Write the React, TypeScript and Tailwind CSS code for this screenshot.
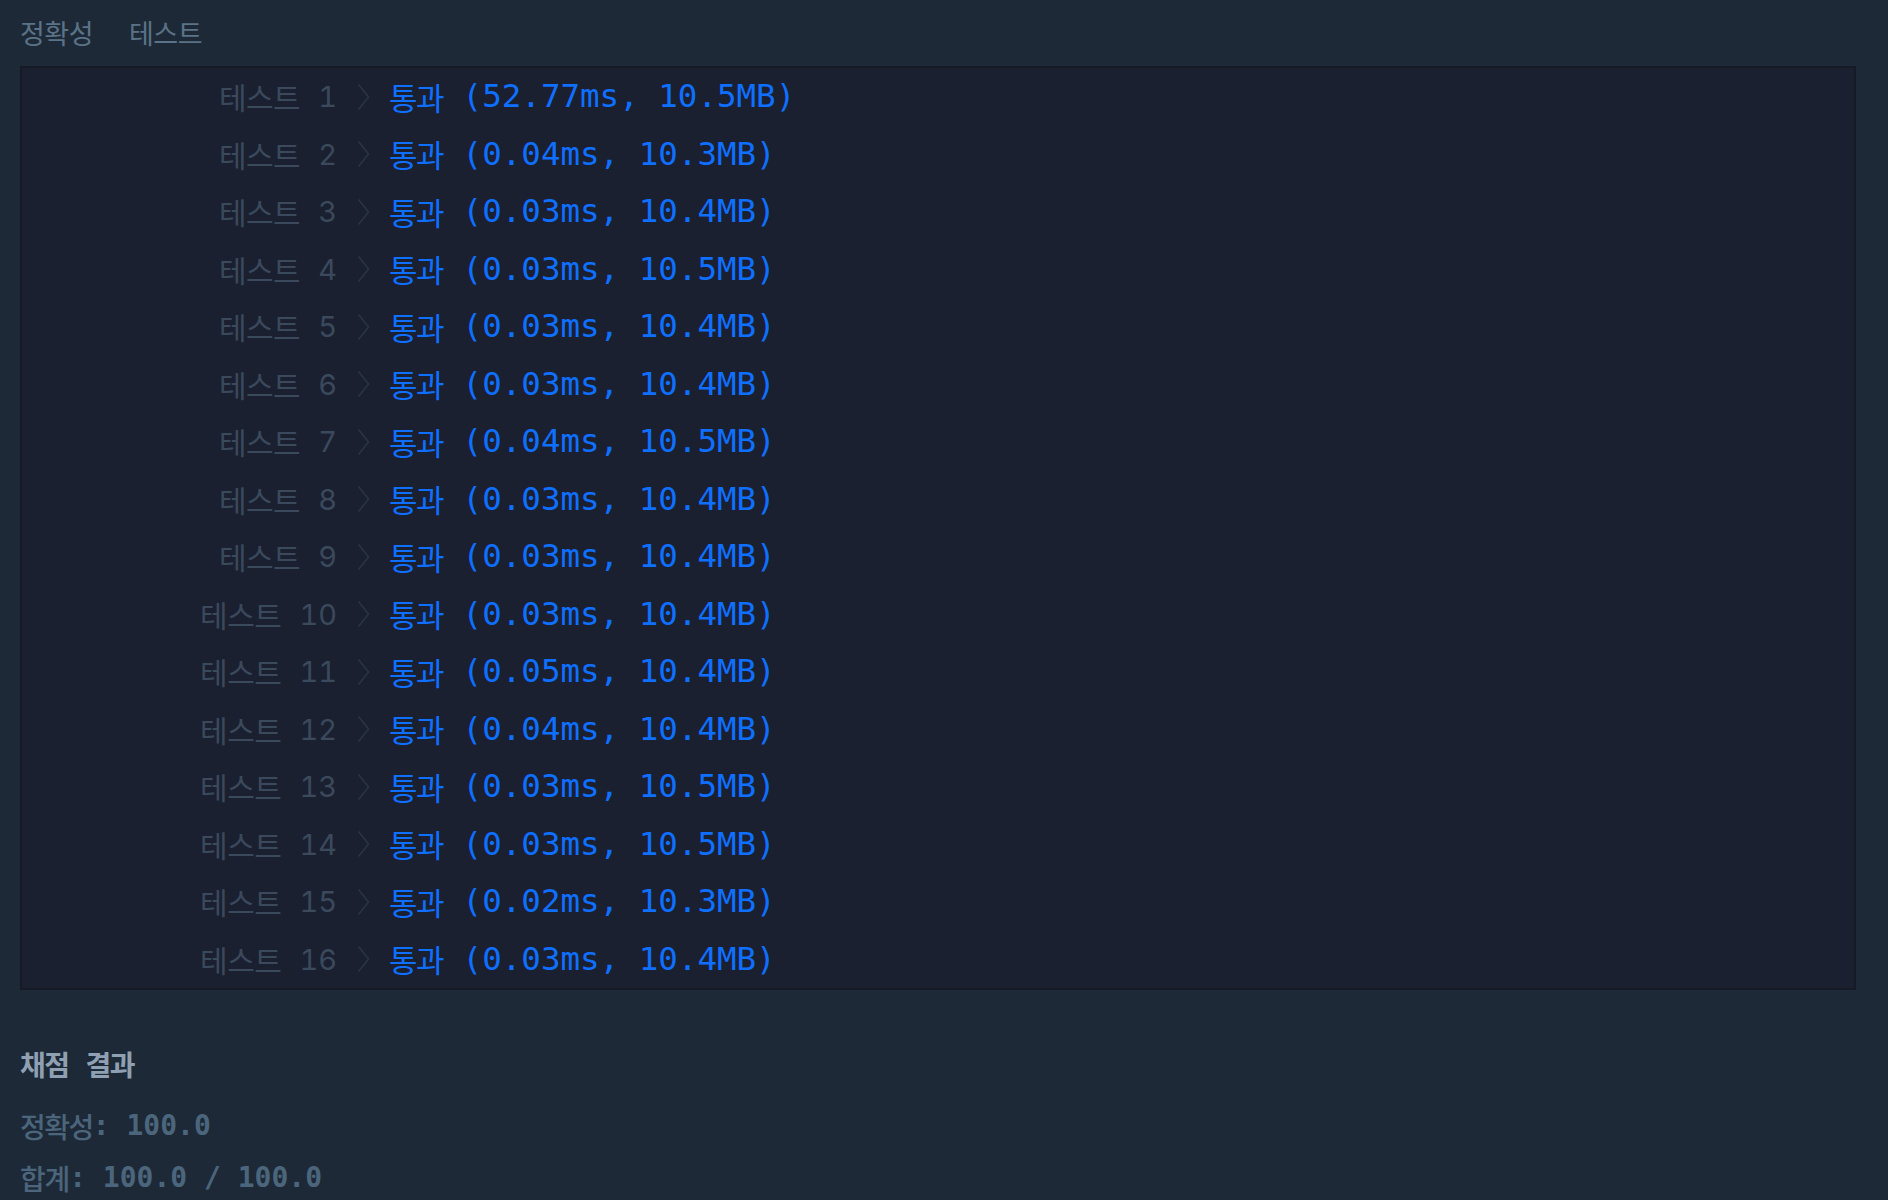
import React from "react";

type Result = { ms: string; mb: string };

// 테스트별 결과
const RESULTS: Result[] = [
  { ms: "52.77", mb: "10.5" },
  { ms: "0.04", mb: "10.3" },
  { ms: "0.03", mb: "10.4" },
  { ms: "0.03", mb: "10.5" },
  { ms: "0.03", mb: "10.4" },
  { ms: "0.03", mb: "10.4" },
  { ms: "0.04", mb: "10.5" },
  { ms: "0.03", mb: "10.4" },
  { ms: "0.03", mb: "10.4" },
  { ms: "0.03", mb: "10.4" },
  { ms: "0.05", mb: "10.4" },
  { ms: "0.04", mb: "10.4" },
  { ms: "0.03", mb: "10.5" },
  { ms: "0.03", mb: "10.5" },
  { ms: "0.02", mb: "10.3" },
  { ms: "0.03", mb: "10.4" },
];

const MONO = "font-['DejaVu_Sans_Mono','Noto_Sans_CJK_KR',monospace]";
const KR = "font-['Noto_Sans_CJK_KR',sans-serif]";

function Chevron() {
  return (
    <svg width="13" height="28" viewBox="0 0 13 28" fill="none" className="shrink-0">
      <polyline points="1.5,1.5 11.5,14 1.5,26.5" stroke="#293444" strokeWidth="1.6" />
    </svg>
  );
}

function Row({ n, r }: { n: number; r: Result }) {
  return (
    <div className="flex h-[57.5px] items-center">
      <div className="flex w-[315px] shrink-0 items-center justify-end text-[#3a495c]">
        <span className={`${KR} text-[30px] tracking-[-0.5px]`}>테스트</span>
        <span className="ml-[18px] font-['Inter',sans-serif] text-[29px] font-normal tabular-nums">{n}</span>
      </div>
      <div className="ml-[20px]">
        <Chevron />
      </div>
      <div className={`ml-[19px] flex items-center whitespace-pre text-[32.5px] text-[#0f6fff] ${MONO}`}>
        <span className={`${KR} text-[31px] tracking-[-1.5px]`}>통과</span>
        <span>{` (${r.ms}ms, ${r.mb}MB)`}</span>
      </div>
    </div>
  );
}

export default function App() {
  return (
    <div className="min-h-screen w-full bg-[#1e2937] pl-[20px] pr-[32px]">
      {/* 탭 */}
      <div className={`flex h-[66px] items-center gap-[36px] text-[27px] text-[#5a7387] ${KR}`}>
        <span className="tracking-[-0.5px]">정확성</span>
        <span className="tracking-[-0.5px]">테스트</span>
      </div>

      {/* 테스트 결과 */}
      <div className="border-2 border-[#141b27] bg-[#1a2030]">
        {RESULTS.map((r, i) => (
          <Row key={i} n={i + 1} r={r} />
        ))}
      </div>

      {/* 채점 결과 */}
      <div className={`mt-[48px] text-[28px] ${MONO}`}>
        <div className="mb-[10px] flex h-[52px] items-center whitespace-pre font-semibold text-[#8fa0b2]">
          <span className={`${KR} tracking-[-1.5px]`}>채점</span>
          <span> </span>
          <span className={`${KR} tracking-[-1.5px]`}>결과</span>
        </div>
        <div className="flex h-[52px] items-center whitespace-pre font-semibold text-[#4b667c]">
          <span className={`${KR} font-medium tracking-[-1.5px]`}>정확성</span>
          <span>: 100.0</span>
        </div>
        <div className="flex h-[52px] items-center whitespace-pre font-semibold text-[#4b667c]">
          <span className={`${KR} font-medium tracking-[-1.2px]`}>합계</span>
          <span>: 100.0 / 100.0</span>
        </div>
      </div>
    </div>
  );
}
